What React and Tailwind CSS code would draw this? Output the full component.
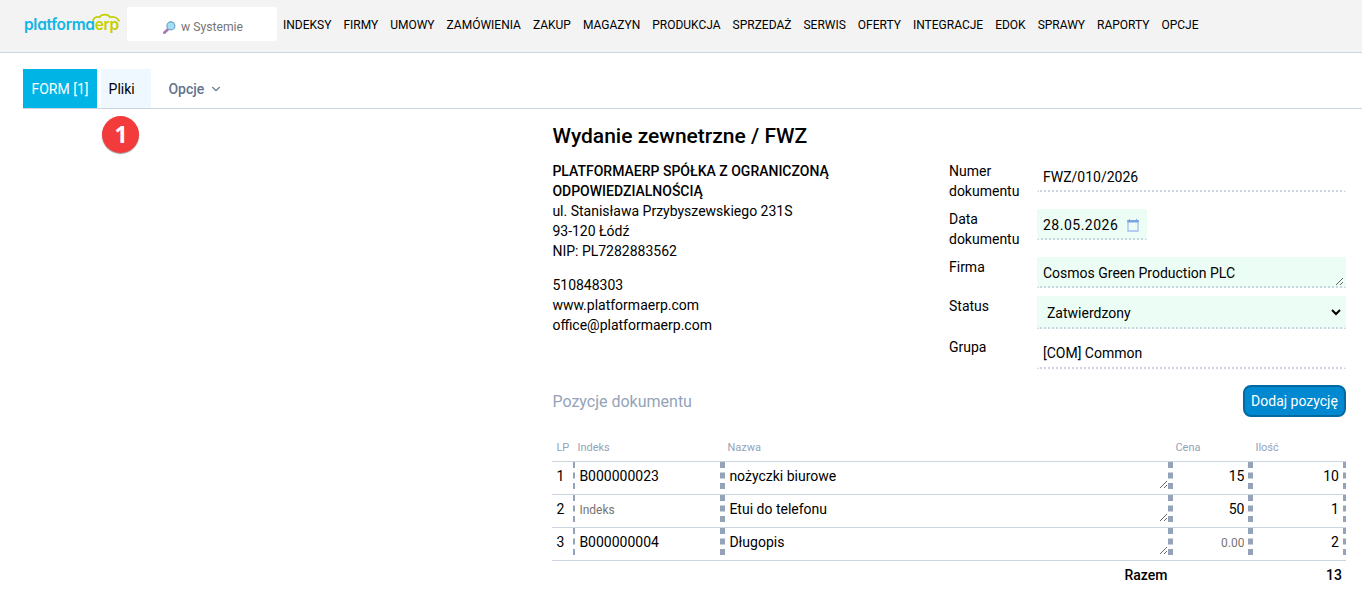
import React from "react";

const NAV = [
  "INDEKSY", "FIRMY", "UMOWY", "ZAMÓWIENIA", "ZAKUP", "MAGAZYN", "PRODUKCJA", "SPRZEDAŻ",
  "SERWIS", "OFERTY", "INTEGRACJE", "EDOK", "SPRAWY", "RAPORTY", "OPCJE",
];

const ITEMS = [
  { lp: 1, index: "B000000023", name: "nożyczki biurowe", price: "15", qty: "10" },
  { lp: 2, index: "", name: "Etui do telefonu", price: "50", qty: "1" },
  { lp: 3, index: "B000000004", name: "Długopis", price: "", qty: "2" },
];

function Logo() {
  return (
    <div className="relative ml-6 mt-[13px] h-6 w-[97px] shrink-0 whitespace-nowrap font-[Inter,sans-serif] text-[15.5px] leading-6 font-semibold tracking-[-0.3px] [font-feature-settings:'cv11']">
      <span className="text-[#12b5e5]">platforma</span>
      <span className="text-[#c3d000]">erp</span>
      <svg className="absolute left-[67px] top-0 h-[10px] w-[30px]" viewBox="0 0 30 10" fill="none" stroke="#c3d000" strokeWidth="1.7" strokeLinecap="round">
        <path d="M2 7.5C2.5 4.5 5.500 3.300 8.500 4.300C10.500 .9 17 .5 19 4.300C21.500 3.300 26 4 28 7.800" />
      </svg>
    </div>
  );
}

function Magnifier() {
  return (
    <svg className="h-[13px] w-[13px]" viewBox="0 0 13 13">
      <path d="M1.300 11.700L5 8.200" stroke="#a577b5" strokeWidth="2.600" strokeLinecap="round" />
      <circle cx="7.900" cy="4.900" r="4" fill="#a3dcf5" stroke="#6b9fc4" strokeWidth="1.100" />
    </svg>
  );
}

function Header() {
  return (
    <header className="flex h-[53px] border-b border-[#cbd5e1] bg-[#f3f3f3]">
      <Logo />
      <div className="ml-1.5 mt-[7px] flex h-[34px] w-[150px] shrink-0 items-center justify-center gap-[5px] bg-white pt-[6px] pl-[2px] text-[12.2px] text-[#757575]">
        <Magnifier />
        <span className="pt-[2px]">w Systemie</span>
      </div>
      <nav className="ml-1.5 mt-[15px] flex gap-3 text-xs leading-5 whitespace-nowrap">
        {NAV.map((n) => <a key={n}>{n}</a>)}
      </nav>
    </header>
  );
}

function Tabs() {
  return (
    <div className="ml-[23px] mt-4 flex h-10 border-b border-[#cbd5e1] text-sm">
      <div className="flex w-[74px] items-center justify-center bg-[#00b4e6] pt-px text-white">FORM [1]</div>
      <div className="relative ml-1 flex w-[50px] items-center bg-[#f0f8ff] pl-[7.600px] pt-px">
        Pliki
        <span className="absolute left-[1px] top-[47px] flex h-[37px] w-[37px] items-center justify-center rounded-full bg-[#f43b3b] pl-px font-['Open_Sans',sans-serif] text-[23px] font-bold text-white shadow-[0_1px_1px_rgba(0,0,0,0.4)]">1</span>
      </div>
      <div className="ml-[17.400px] flex items-center pt-px font-medium text-[#64748b]">
        Opcje
        <svg className="ml-[7px] h-2 w-[10px]" viewBox="0 0 10 8" fill="none" stroke="#64748b" strokeWidth="1.100">
          <path d="M1.300 2L5 5.700L8.700 2" />
        </svg>
      </div>
    </div>
  );
}

function Company() {
  return (
    <div className="w-[396.600px] pr-20">
      <div className="font-medium">PLATFORMAERP SPÓŁKA Z OGRANICZONĄ ODPOWIEDZIALNOŚCIĄ</div>
      <div>ul. Stanisława Przybyszewskiego 231S</div>
      <div>93-120 Łódź</div>
      <div>NIP: PL7282883562</div>
      <div className="mt-3.5">510848303</div>
      <div>www.platformaerp.com</div>
      <div>office@platformaerp.com</div>
    </div>
  );
}

const FIELD = "border-x-2 border-b-2 border-dotted border-x-transparent border-b-[#cbd5e1] outline-none";

function Row({ label, className, children }) {
  return (
    <div className={"flex " + className}>
      <label className="w-[88px] pr-4">{label}</label>
      {children}
    </div>
  );
}

function DocumentForm() {
  return (
    <div className="w-[397px]">
      <Row label="Numer dokumentu" className="h-12">
        <input className={FIELD + " h-[31px] w-[309px] px-1 pt-[3px]"} defaultValue="FWZ/010/2026" />
      </Row>
      <Row label="Data dokumentu" className="h-12">
        <div className={FIELD + " flex h-[31px] w-[110px] items-center bg-[#ecfdf5] pl-1 pt-[3px]"}>
          <span className="w-[84px] shrink-0 tracking-[0.500px]">28.05.2026</span>
          <svg className="h-[13px] w-3 shrink-0" viewBox="0 0 12 13" fill="none">
            <path d="M1 2H11V12H1Z" stroke="#a3bdee" strokeWidth="1.300" />
            <path d="M.3 1H11.700V3.500H.3Z" fill="#7ba1e6" />
            <path d="M2.500 0V2M9.500 0V2" stroke="#7ba1e6" />
          </svg>
        </div>
      </Row>
      <Row label="Firma" className="h-[39px]">
        <textarea className={FIELD + " h-[31px] w-[309px] resize overflow-hidden bg-[#ecfdf5] px-1 pt-1.5 leading-5"} defaultValue="Cosmos Green Production PLC" />
      </Row>
      <Row label="Status" className="h-[41px]">
        <select className={FIELD + " h-[33px] w-[309px] bg-[#ecfdf5] pl-1 pt-[3px]"}>
          <option>Zatwierdzony</option>
        </select>
      </Row>
      <Row label="Grupa" className="h-8">
        <input className={FIELD + " h-8 w-[309px] px-1 pt-[2px]"} defaultValue="[COM] Common" />
      </Row>
    </div>
  );
}

const CELL = "block h-[27px] w-full border-l-2 border-r-[3px] border-dashed border-[#94a3b8] px-1 outline-none placeholder:text-[#757575]";
const COLS = "grid grid-cols-[21px_150px_448px_80px_94.6px]";

function Items() {
  return (
    <div className="mt-[21px] w-[793.600px]">
      <div className={COLS + " h-[24px] border-b border-[#cbd5e1] text-[11px] leading-5 text-[#94a3b8] *:pl-1"}>
        <span>LP</span><span>Indeks</span><span>Nazwa</span><span>Cena</span><span>Ilość</span>
      </div>
      {ITEMS.map((r) => (
        <div key={r.lp} className={COLS + " h-[33px] border-b border-[#cbd5e1]"}>
          <span className="pl-1 pt-1">{r.lp}</span>
          <input className={CELL + " pt-px placeholder:text-xs"} placeholder="Indeks" defaultValue={r.index} />
          <textarea className={CELL + " resize overflow-hidden pt-1 leading-5"} defaultValue={r.name} />
          <input className={CELL + " pt-px text-right placeholder:text-xs"} placeholder="0.00" defaultValue={r.price} />
          <input className={CELL + " pt-px text-right"} defaultValue={r.qty} />
        </div>
      ))}
      <div className={COLS + " pt-1 font-medium"}>
        <span className="col-span-3 pr-1 text-right">Razem</span>
        <span className="col-span-2 pr-1 text-right">13</span>
      </div>
    </div>
  );
}

export default function App() {
  return (
    <div className="h-[604px] w-[1362px] overflow-hidden bg-white font-[Roboto,sans-serif] text-sm text-black">
      <Header />
      <Tabs />
      <main className="ml-[552.400px] mt-[13px] w-[793.600px]">
        <h1 className="text-[21px] leading-7 font-medium">Wydanie zewnetrzne / FWZ</h1>
        <div className="mt-[11px] flex h-[224px] leading-5">
          <Company />
          <DocumentForm />
        </div>
        <div className="flex h-8 items-center justify-between">
          <h2 className="pt-[2px] text-base text-[#94a3b8]">Pozycje dokumentu</h2>
          <button className="h-8 w-[103px] rounded-lg border-2 border-[#0369a1] bg-[#0088d0] text-sm whitespace-nowrap text-white">Dodaj pozycję</button>
        </div>
        <Items />
      </main>
    </div>
  );
}
